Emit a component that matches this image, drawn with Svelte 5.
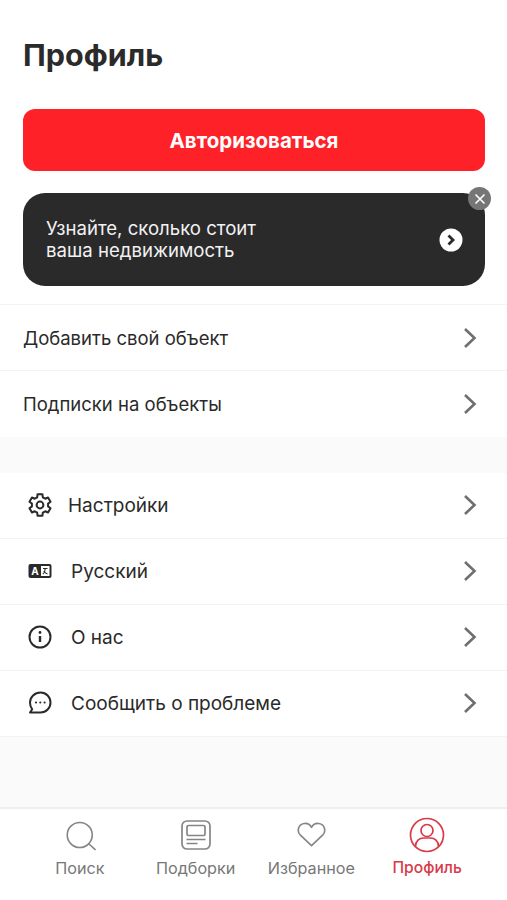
<script lang="ts">
  const topRows = ["Добавить свой объект", "Подписки на объекты"]
  const tabs = [
    { id: "search", label: "Поиск" },
    { id: "picks", label: "Подборки" },
    { id: "fav", label: "Избранное" },
    { id: "profile", label: "Профиль", active: true }
  ]
</script>

{#snippet chevron()}
  <svg class="chevron" width="14" height="22" viewBox="0 0 14 22" fill="none">
    <path d="M2 2l9.5 9L2 20" stroke="#6f6f6f" stroke-width="2.6" />
  </svg>
{/snippet}

<div class="page">
  <div class="top">
    <h1>Профиль</h1>
    <button class="login">Авторизоваться</button>

    <div class="promo">
      <p>Узнайте, сколько стоит<br />ваша недвижимость</p>
      <svg width="24" height="24" viewBox="0 0 24 24">
        <circle cx="12" cy="12" r="11.5" fill="#fff" />
        <path d="M9.5 7.5l4.5 4.5-4.5 4.5" fill="none" stroke="#2a2a2a" stroke-width="2.8" />
      </svg>
      <span class="close">
        <svg width="12" height="12" viewBox="0 0 12 12">
          <path d="M1.5 1.5l9 9M10.5 1.5l-9 9" stroke="#fff" stroke-width="1.6" />
        </svg>
      </span>
    </div>

    <div class="group first">
      {#each topRows as row}
        <div class="row">
          <span>{row}</span>
          {@render chevron()}
        </div>
      {/each}
    </div>
  </div>

  <div class="group second">
    <div class="row">
      <div class="left">
        <svg class="ico" width="24" height="24" viewBox="0 0 24 24" fill="none" stroke="#2a2a2a" stroke-width="2" stroke-linejoin="round">
          <circle cx="12" cy="12" r="3.4" />
          <path d="M9.53 1.28H14.47L14.8 4.29 17.27 5.72 20.04 4.5 22.52 8.78 20.08 10.58V13.42L22.52 15.22 20.04 19.5 17.27 18.28 14.8 19.71 14.47 22.72H9.53L9.2 19.71 6.73 18.28 3.96 19.5 1.48 15.22 3.92 13.42V10.58L1.48 8.78 3.96 4.5 6.73 5.72 9.2 4.29Z" />
        </svg>
        <span class="settings">Настройки</span>
      </div>
      {@render chevron()}
    </div>
    <div class="row">
      <div class="left">
        <svg class="ico" width="24" height="16" viewBox="0 0 24 16">
          <rect x="0.5" y="1" width="23" height="14" rx="2" fill="#2a2a2a" />
          <rect x="13" y="3" width="8.5" height="10" fill="#fff" />
          <text x="3.2" y="12" class="ab">A</text>
          <path d="M15 5.500h4.500M17.200 5.500c0 3-1 4.500-2.400 5.500M15.800 8c.8 1.300 2 2.400 3.700 3" stroke="#2a2a2a" stroke-width="1.1" fill="none" />
        </svg>
        <span>Русский</span>
      </div>
      {@render chevron()}
    </div>
    <div class="row">
      <div class="left">
        <svg class="ico" width="24" height="24" viewBox="0 0 24 24" fill="none" stroke="#2a2a2a" stroke-width="2">
          <circle cx="12" cy="12" r="10.5" />
          <path d="M12 11v6" stroke-width="2.4" />
          <circle cx="12" cy="7.5" r="1.4" fill="#2a2a2a" stroke="none" />
        </svg>
        <span>О нас</span>
      </div>
      {@render chevron()}
    </div>
    <div class="row">
      <div class="left">
        <svg class="ico" width="24" height="24" viewBox="0 0 24 24" fill="none" stroke="#2a2a2a" stroke-width="2">
          <path d="M12.500 1.500c5.800 0 10 4.500 10 10s-4.200 10-10 10H2l2.200-3.200C2.900 16.600 2 14.400 2 11.500c0-5.500 4.700-10 10.500-10z" stroke-linejoin="round" />
          <circle cx="8" cy="11.5" r="1.1" fill="#2a2a2a" stroke="none" />
          <circle cx="12.3" cy="11.5" r="1.1" fill="#2a2a2a" stroke="none" />
          <circle cx="16.6" cy="11.5" r="1.1" fill="#2a2a2a" stroke="none" />
        </svg>
        <span>Сообщить о проблеме</span>
      </div>
      {@render chevron()}
    </div>
  </div>

  <nav class="tabs">
    {#each tabs as tab}
      <div class="tab" class:active={tab.active}>
        <div class="tab-icon">
          {#if tab.id === "search"}
            <svg width="32" height="32" viewBox="0 0 32 32" fill="none" stroke="#858585" stroke-width="1.6">
              <circle cx="15.75" cy="16" r="12.5" />
              <path d="M24.500 24.500l7 6.500" />
            </svg>
          {:else if tab.id === "picks"}
            <svg width="30" height="30" viewBox="0 0 30 30" fill="none" stroke="#858585" stroke-width="1.7">
              <rect x="1" y="1" width="28" height="28" rx="5" />
              <rect x="6" y="5.5" width="18" height="10" rx="1.5" />
              <path d="M5.500 19.500h19M5.500 23.500h11" />
            </svg>
          {:else if tab.id === "fav"}
            <svg width="29" height="25" viewBox="0 0 30 26" fill="none" stroke="#858585" stroke-width="1.7">
              <path d="M15 24.500L3.200 13.300C-.3 9.800 1 2 7.800 1.500c3.200-.2 5.700 1.300 7.200 4 1.500-2.700 4-4.200 7.200-4C29 2 30.300 9.800 26.800 13.300z" stroke-linejoin="round" />
            </svg>
          {:else}
            <svg width="36" height="36" viewBox="0 0 36 36" fill="none" stroke="#d83a48" stroke-width="1.7">
              <circle cx="18" cy="18" r="16.5" />
              <circle cx="18" cy="13.5" r="6" />
              <path d="M6.500 29.500c0-5.500 4-8.500 8-8.500h7c4 0 8 3 8 8.500" />
            </svg>
          {/if}
        </div>
        <span>{tab.label}</span>
      </div>
    {/each}
  </nav>
</div>

<style>
  :global(body) {
    margin: 0;
    background: #fff;
  }
  .page {
    display: flex;
    flex-direction: column;
    height: 900px;
    font-family: "Inter", "Noto Sans", sans-serif;
    color: #2a2a2a;
    background: #fafafa;
  }
  .top {
    background: #fff;
    padding-top: 36px;
  }
  h1 {
    margin: 0;
    padding: 0 23px;
    font-size: 30.5px;
    line-height: 38px;
    font-weight: 700;
    color: #2a2a2a;
  }
  .login {
    display: block;
    width: 462px;
    height: 62px;
    margin: 35px 22px 0 23px;
    border: 0;
    border-radius: 12px;
    background: #ff2128;
    color: #fff;
    font-family: inherit;
    font-size: 20.5px;
    font-weight: 700;
  }
  .promo {
    position: relative;
    display: flex;
    align-items: center;
    justify-content: space-between;
    width: 462px;
    height: 93px;
    box-sizing: border-box;
    margin: 22px 22px 0 23px;
    padding: 0 22px 0 23px;
    border-radius: 22px;
    background: #2a2a2a;
  }
  .promo p {
    margin: 0 0 1px;
    color: #f2f2f2;
    font-size: 18.6px;
    line-height: 22px;
  }
  .close {
    position: absolute;
    top: -6px;
    right: -6px;
    display: flex;
    align-items: center;
    justify-content: center;
    width: 23px;
    height: 23px;
    border-radius: 50%;
    background: #767676;
  }
  .group {
    background: #fff;
  }
  .first {
    margin-top: 18px;
    border-top: 1px solid #f3f3f3;
  }
  .second {
    margin-top: 36px;
  }
  .row {
    display: flex;
    align-items: center;
    justify-content: space-between;
    height: 66px;
    box-sizing: border-box;
    padding: 0 30px 0 23px;
    border-bottom: 1px solid #f3f3f3;
    font-size: 18.5px;
  }
  .first .row:last-child {
    border-bottom: 0;
  }
  .second .row {
    padding-bottom: 1px;
    font-size: 19px;
  }
  .left {
    display: flex;
    align-items: center;
    gap: 19px;
  }
  .ico {
    margin-left: 5px;
  }
  .settings {
    margin-left: -3px;
  }
  .ab {
    font-size: 10px;
    font-weight: 700;
    fill: #fff;
  }
  .tabs {
    display: grid;
    grid-template-columns: repeat(4, 1fr);
    margin-top: auto;
    height: 93px;
    box-sizing: border-box;
    padding: 0 22px;
    border-top: 2px solid #eee;
    background: #fff;
  }
  .tab {
    display: flex;
    flex-direction: column;
    align-items: center;
    color: #777;
    font-size: 16.2px;
    line-height: 16px;
  }
  .tab-icon {
    display: flex;
    align-items: center;
    justify-content: center;
    height: 51px;
  }
  .tab.active {
    color: #d83a48;
    font-weight: 500;
    font-size: 15.6px;
  }
</style>
